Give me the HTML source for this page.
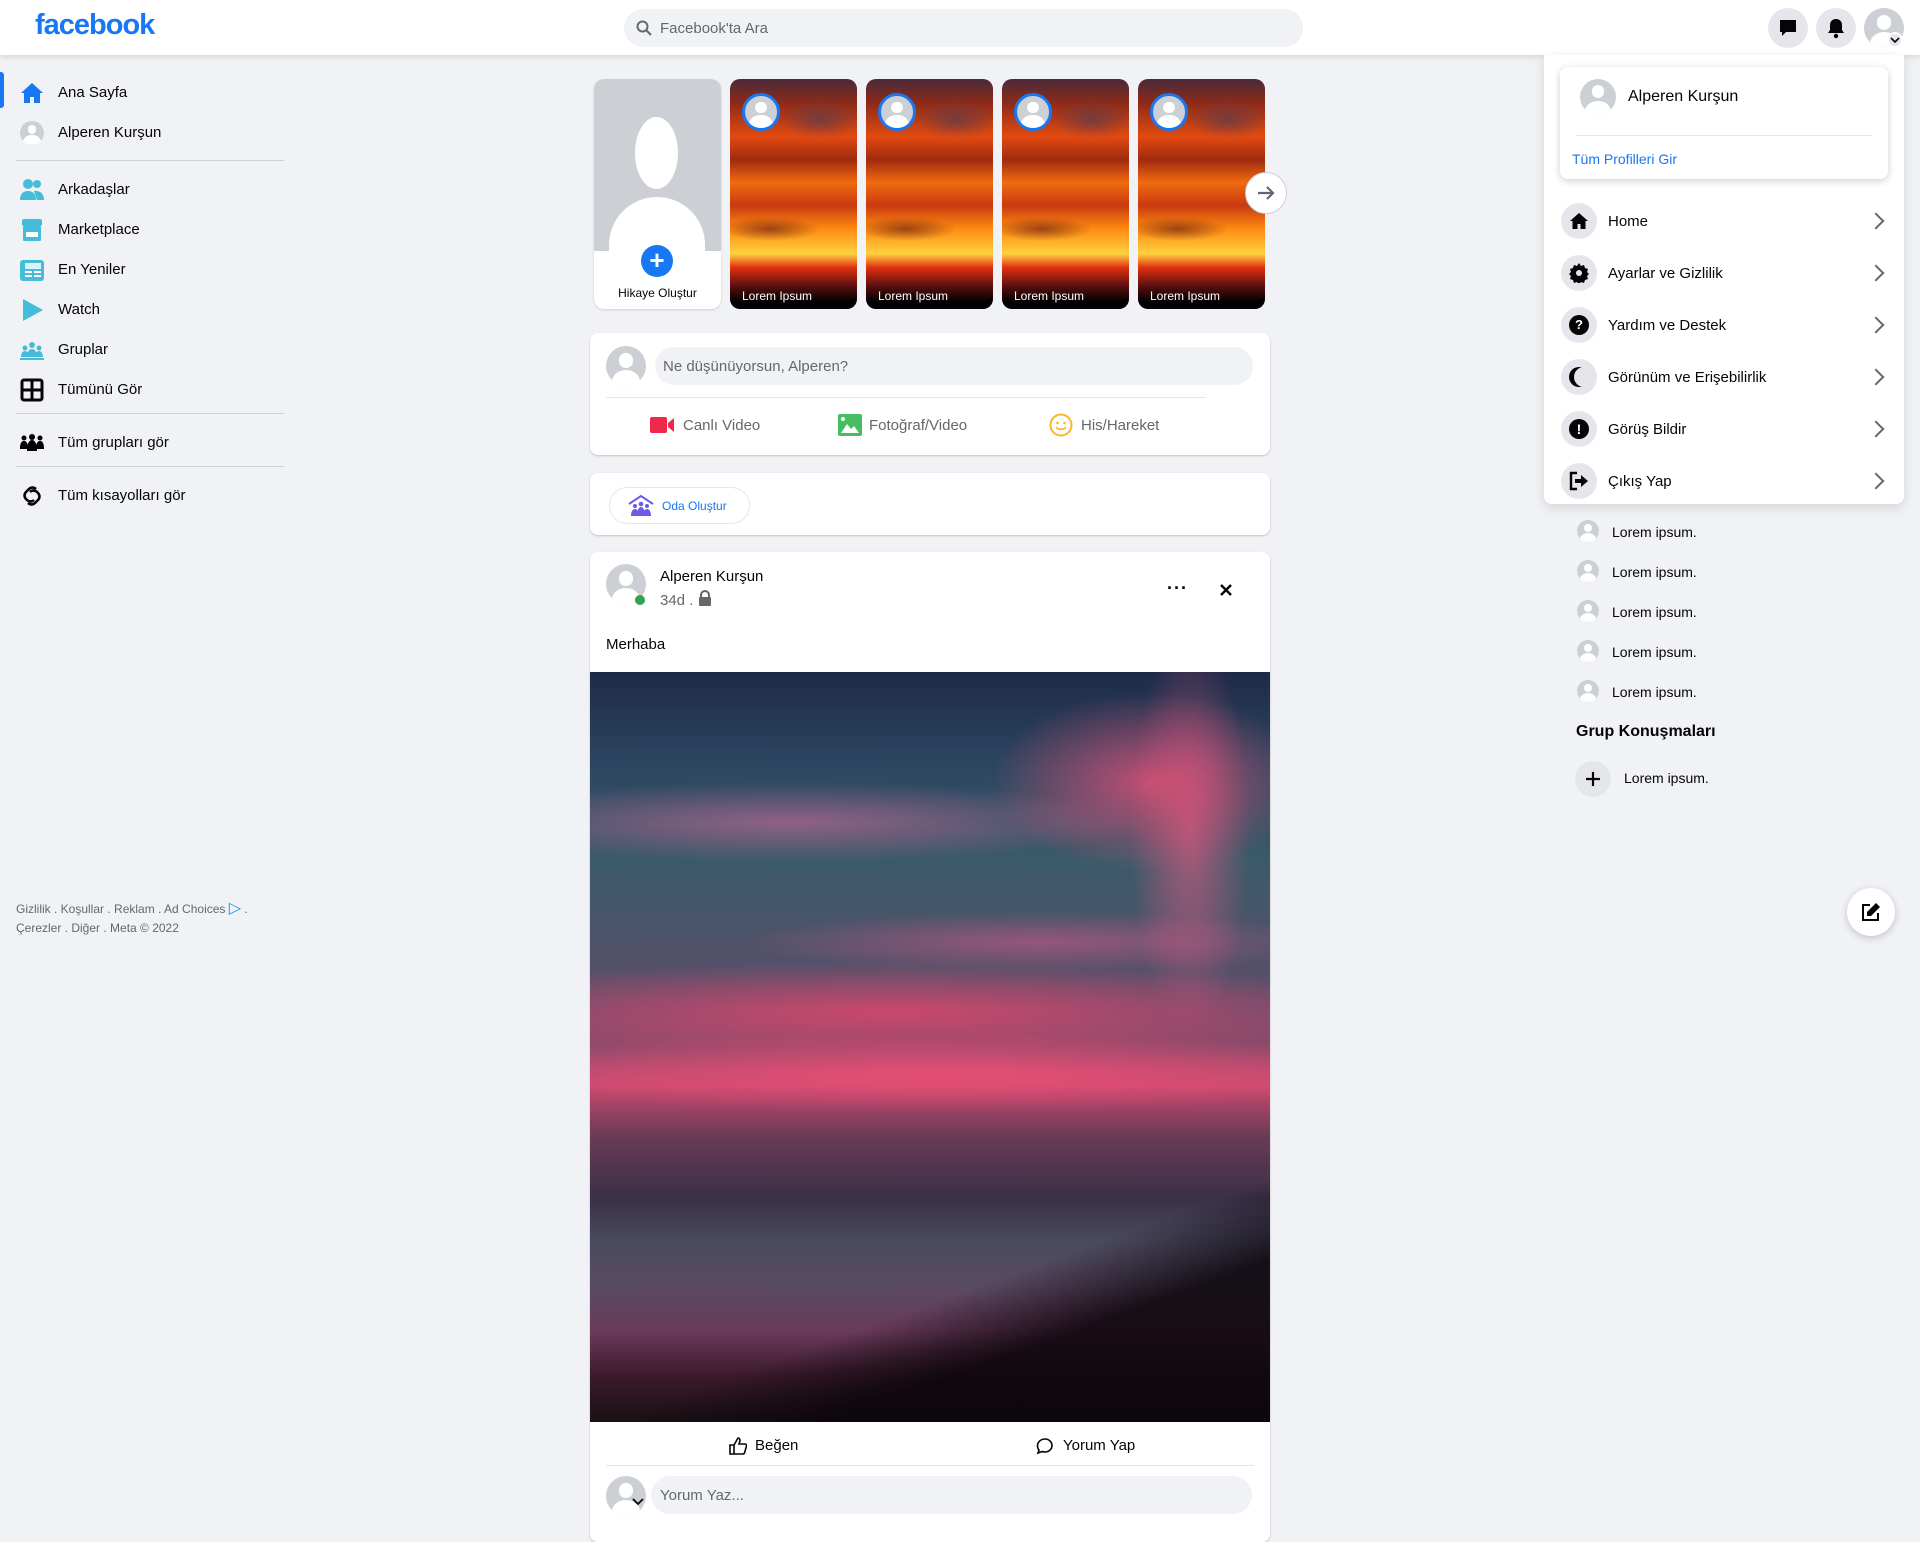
<!DOCTYPE html>
<html><head><meta charset="utf-8">
<style>
*{box-sizing:border-box;margin:0;padding:0}
body{width:1920px;height:1523px;background:#f0f2f5;font-family:"Liberation Sans",sans-serif;color:#050505;position:relative;overflow:hidden}
.a{position:absolute}
.hdr{left:0;top:0;width:1920px;height:55px;background:#fff;box-shadow:0 2px 6px rgba(0,0,0,.12)}
.logo{left:35px;top:9px;font-size:29px;font-weight:bold;color:#1877f2;letter-spacing:-1px}
.search{left:624px;top:9px;width:679px;height:38px;border-radius:19px;background:#f0f2f5;font-size:15px;color:#65676b;padding:11px 0 0 36px}
.hc{width:40px;height:40px;border-radius:50%;background:#e4e6eb;top:8px}
.sb{left:58px;font-size:15px;color:#050505}
.sep{left:16px;width:268px;height:1px;background:#ced0d4}
.ic{left:20px;width:24px;height:24px}
.av{border-radius:50%;background:#ccd0d5;overflow:hidden}
.av:before{content:"";position:absolute;left:32%;top:18%;width:36%;height:36%;border-radius:50%;background:#fff}
.av:after{content:"";position:absolute;left:14%;top:60%;width:72%;height:60%;border-radius:50%;background:#fff}
.card{background:#fff;border-radius:8px;box-shadow:0 1px 2px rgba(0,0,0,.2)}
.story{top:79px;width:127px;height:230px;border-radius:10px;overflow:hidden;
background:radial-gradient(ellipse 40px 20px at 90px 40px,rgba(90,60,80,.7),transparent),radial-gradient(ellipse 50px 12px at 40px 150px,rgba(90,20,20,.6),transparent),linear-gradient(180deg,#4a2a3a 0%,#8a2a1a 10%,#e24a10 25%,#a02a10 35%,#f06a10 45%,#c83a10 55%,#ff8a10 65%,#ffd040 76%,#e03010 82%,#5a1010 90%,#000 97%)}
.story .sa{position:absolute;left:12px;top:14px;width:38px;height:38px;border:3px solid #1877f2}
.story span{position:absolute;left:12px;bottom:6px;color:#fff;font-size:12px}
.mi{left:1561px;width:36px;height:36px;border-radius:50%;background:#e4e6eb}
.mt{left:1608px;font-size:15px;color:#050505}
.chev{left:1870px;width:12px;height:12px;border-right:2.5px solid #606770;border-top:2.5px solid #606770;transform:rotate(45deg)}
.li{left:1577px;width:22px;height:22px}
.lt{left:1612px;font-size:14px}
</style></head><body>
<div class="a hdr"></div>
<div class="a logo">facebook</div>
<div class="a search">Facebook'ta Ara</div>
<svg class="a" style="left:636px;top:20px" width="16" height="16" viewBox="0 0 16 16"><circle cx="6.5" cy="6.5" r="5" fill="none" stroke="#65676b" stroke-width="2"/><path d="M10.5 10.5L15 15" stroke="#65676b" stroke-width="2"/></svg>
<div class="a hc" style="left:1768px"></div>
<svg class="a" style="left:1778px;top:18px" width="20" height="20" viewBox="0 0 20 20"><path d="M2 2h16v12H8l-4 4v-4H2z" fill="#050505"/></svg>
<div class="a hc" style="left:1816px"></div>
<svg class="a" style="left:1826px;top:17px" width="20" height="22" viewBox="0 0 20 22"><path d="M10 2c-4 0-6 3-6 6v5l-2 3h16l-2-3V8c0-3-2-6-6-6z" fill="#050505"/><circle cx="10" cy="19" r="2.2" fill="#050505"/></svg>
<div class="a hc av" style="left:1864px"></div>
<div class="a" style="left:1887px;top:32px;width:16px;height:16px;border-radius:50%;background:#e4e6eb;border:2px solid #fff"></div>
<svg class="a" style="left:1890px;top:36px" width="10" height="8"><path d="M1 2l4 4 4-4" fill="none" stroke="#050505" stroke-width="1.6"/></svg>

<div class="a" style="left:0;top:72px;width:4px;height:36px;background:#1877f2;border-radius:0 3px 3px 0"></div>
<svg class="a ic" style="top:81px" viewBox="0 0 24 24"><path d="M12 2L1 12h3v10h6v-6h4v6h6V12h3z" fill="#1877f2"/></svg>
<div class="a sb" style="top:84px">Ana Sayfa</div>
<div class="a av ic" style="top:121px;position:absolute"></div>
<div class="a sb" style="top:124px">Alperen Kurşun</div>
<div class="a sep" style="top:160px"></div>
<svg class="a ic" style="top:178px" viewBox="0 0 24 24"><circle cx="8" cy="6" r="5" fill="#45bdd8"/><circle cx="17" cy="6" r="4" fill="#45bdd8"/><path d="M0 22c0-6 3-9 8-9s8 3 8 9z" fill="#45bdd8"/><path d="M14 13c5-1 10 2 10 9h-7z" fill="#45bdd8"/></svg>
<div class="a sb" style="top:181px">Arkadaşlar</div>
<svg class="a ic" style="top:218px" viewBox="0 0 24 24"><rect x="2" y="1" width="20" height="7" rx="2" fill="#45bdd8"/><rect x="3" y="8" width="18" height="15" rx="1" fill="#45bdd8"/><rect x="6" y="14" width="12" height="5" fill="#fff"/></svg>
<div class="a sb" style="top:221px">Marketplace</div>
<svg class="a ic" style="top:258px" viewBox="0 0 24 24"><rect x="0" y="2" width="24" height="21" rx="3" fill="#45bdd8"/><rect x="5" y="5" width="16" height="6" fill="#fff" opacity=".8"/><rect x="5" y="13" width="7" height="2" fill="#fff"/><rect x="14" y="13" width="7" height="2" fill="#fff"/><rect x="5" y="17" width="7" height="2" fill="#fff"/><rect x="14" y="17" width="7" height="2" fill="#fff"/></svg>
<div class="a sb" style="top:261px">En Yeniler</div>
<svg class="a ic" style="top:298px" viewBox="0 0 24 24"><path d="M3 1l20 11L3 23z" fill="#45bdd8"/></svg>
<div class="a sb" style="top:301px">Watch</div>
<svg class="a ic" style="top:338px" viewBox="0 0 24 24"><circle cx="5" cy="10" r="2.5" fill="#45bdd8"/><circle cx="12" cy="7" r="3" fill="#45bdd8"/><circle cx="19" cy="10" r="2.5" fill="#45bdd8"/><path d="M1 19c0-4 2-6 4-6s4 2 4 6zM7 19c0-5 2-8 5-8s5 3 5 8zM15 19c0-4 2-6 4-6s4 2 4 6z" fill="#45bdd8"/><rect x="0" y="20" width="24" height="2" fill="#45bdd8"/></svg>
<div class="a sb" style="top:341px">Gruplar</div>
<svg class="a ic" style="top:378px" viewBox="0 0 24 24"><rect x="2" y="2" width="20" height="20" rx="2" fill="none" stroke="#050505" stroke-width="3"/><path d="M12 2v20M2 12h20" stroke="#050505" stroke-width="3"/></svg>
<div class="a sb" style="top:381px">Tümünü Gör</div>
<div class="a sep" style="top:413px"></div>
<svg class="a ic" style="top:431px" viewBox="0 0 24 24"><circle cx="4" cy="7" r="2.5"/><circle cx="12" cy="6" r="3"/><circle cx="20" cy="7" r="2.5"/><path d="M0 18c0-5 1-8 4-8s4 3 4 8zM7 20c0-7 2-11 5-11s5 4 5 11zM16 18c0-5 1-8 4-8s4 3 4 8z"/></svg>
<div class="a sb" style="top:434px">Tüm grupları gör</div>
<div class="a sep" style="top:466px"></div>
<svg class="a ic" style="top:484px" viewBox="0 0 24 24"><path d="M10 8a5 5 0 0 1 7 0l1 1a5 5 0 0 1 0 7l-3 3a5 5 0 0 1-7 0M14 16a5 5 0 0 1-7 0l-1-1a5 5 0 0 1 0-7l3-3a5 5 0 0 1 7 0" fill="none" stroke="#050505" stroke-width="2.6"/></svg>
<div class="a sb" style="top:487px">Tüm kısayolları gör</div>
<div class="a" style="left:16px;top:899px;font-size:12px;color:#65676b;line-height:19px">Gizlilik . Koşullar . Reklam . Ad Choices <span style="color:#00a0e0;font-size:16px">▷</span> .<br>Çerezler . Diğer . Meta © 2022</div>

<div class="a" style="left:594px;top:79px;width:127px;height:230px;border-radius:10px;overflow:hidden;background:#fff;box-shadow:0 1px 2px rgba(0,0,0,.15)">
 <div style="position:absolute;left:0;top:0;width:127px;height:172px;background:#ccd0d5"></div>
 <div style="position:absolute;left:41px;top:38px;width:43px;height:72px;border-radius:50%;background:#fff"></div>
 <div style="position:absolute;left:15px;top:118px;width:96px;height:100px;border-radius:48px 48px 0 0;background:#fff"></div>
 <div style="position:absolute;left:47px;top:166px;width:32px;height:32px;border-radius:50%;background:#1877f2;color:#fff;font-size:26px;line-height:30px;text-align:center;font-weight:bold">+</div>
 <div style="position:absolute;left:0;width:127px;top:207px;text-align:center;font-size:12px;color:#050505">Hikaye Oluştur</div>
</div>
<div class="a story" style="left:730px"><div class="av sa"></div><span>Lorem Ipsum</span></div>
<div class="a story" style="left:866px"><div class="av sa"></div><span>Lorem Ipsum</span></div>
<div class="a story" style="left:1002px"><div class="av sa"></div><span>Lorem Ipsum</span></div>
<div class="a story" style="left:1138px"><div class="av sa"></div><span>Lorem Ipsum</span></div>
<div class="a" style="left:1245px;top:172px;width:42px;height:42px;border-radius:50%;background:#fff;border:1px solid #ccd0d5"></div>
<svg class="a" style="left:1256px;top:183px" width="20" height="20" viewBox="0 0 20 20"><path d="M2 10h15M11 4l6 6-6 6" fill="none" stroke="#606770" stroke-width="2.2"/></svg>

<div class="a card" style="left:590px;top:333px;width:680px;height:122px"></div>
<div class="a av" style="left:606px;top:346px;width:40px;height:40px"></div>
<div class="a" style="left:655px;top:347px;width:598px;height:38px;border-radius:19px;background:#f0f2f5;font-size:15px;color:#65676b;padding:11px 0 0 8px">Ne düşünüyorsun, Alperen?</div>
<div class="a" style="left:606px;top:397px;width:600px;height:1px;background:#e4e6eb"></div>
<svg class="a" style="left:650px;top:415px" width="26" height="20" viewBox="0 0 26 20"><rect x="0" y="2" width="17" height="16" rx="2" fill="#f02849"/><path d="M18 8l6-5v14l-6-5z" fill="#f02849"/></svg>
<div class="a" style="left:683px;top:417px;font-size:15px;color:#65676b">Canlı Video</div>
<svg class="a" style="left:838px;top:414px" width="24" height="22" viewBox="0 0 24 22"><rect x="0" y="0" width="24" height="22" rx="2" fill="#45bd62"/><path d="M3 19l6-9 4 5 3-3 5 7z" fill="#fff"/><circle cx="5" cy="5" r="2" fill="#fff"/></svg>
<div class="a" style="left:869px;top:417px;font-size:15px;color:#65676b">Fotoğraf/Video</div>
<svg class="a" style="left:1049px;top:413px" width="24" height="24" viewBox="0 0 24 24"><circle cx="12" cy="12" r="10.5" fill="#fff" stroke="#f7b928" stroke-width="2"/><circle cx="8.5" cy="10" r="1.3" fill="#f7b928"/><circle cx="15.5" cy="10" r="1.3" fill="#f7b928"/><path d="M7 14c2 3 8 3 10 0" fill="none" stroke="#f7b928" stroke-width="1.6"/></svg>
<div class="a" style="left:1081px;top:417px;font-size:15px;color:#65676b">His/Hareket</div>

<div class="a card" style="left:590px;top:473px;width:680px;height:62px"></div>
<div class="a" style="left:609px;top:487px;width:141px;height:37px;border-radius:19px;border:1px solid #e4e6eb"></div>
<svg class="a" style="left:628px;top:495px" width="26" height="22" viewBox="0 0 26 22"><path d="M1 9L13 1l12 8" fill="none" stroke="#6b5ce7" stroke-width="2"/><circle cx="7" cy="11" r="2" fill="#6b5ce7"/><circle cx="13" cy="9" r="2.3" fill="#6b5ce7"/><circle cx="19" cy="11" r="2" fill="#6b5ce7"/><path d="M3 21c0-5 2-7 4-7s4 2 4 7zM9 21c0-6 2-9 4-9s4 3 4 9zM15 21c0-5 2-7 4-7s4 2 4 7z" fill="#6b5ce7"/></svg>
<div class="a" style="left:662px;top:499px;font-size:12px;color:#1877f2">Oda Oluştur</div>

<div class="a card" style="left:590px;top:552px;width:680px;height:990px;overflow:hidden">
 <div style="position:absolute;left:0;top:120px;width:680px;height:750px;
 background:
 radial-gradient(ellipse 160px 90px at 560px 110px,rgba(240,80,120,.75),transparent),
 radial-gradient(ellipse 60px 200px at 600px 160px,rgba(240,90,130,.6),transparent),
 radial-gradient(ellipse 360px 40px at 200px 150px,rgba(220,110,160,.55),transparent),
 radial-gradient(ellipse 300px 30px at 450px 270px,rgba(220,90,140,.5),transparent),
 radial-gradient(ellipse 500px 50px at 300px 340px,rgba(240,70,110,.7),transparent),
 radial-gradient(ellipse 500px 40px at 350px 400px,rgba(250,80,120,.7),transparent),
 linear-gradient(180deg,#1e2a48 0%,#2b4560 12%,#3a5a6a 25%,#56506a 40%,#8a4a6a 50%,#c84a70 55%,#6a3a55 62%,#3a3048 70%,#4a4a5e 76%,#5a4a62 82%,#6a3a5a 88%,#3a1a2a 94%,#1a1015 100%)"></div>
 <div style="position:absolute;left:0;top:580px;width:680px;height:290px;background:linear-gradient(160deg,transparent 55%,rgba(10,5,10,.85) 70%)"></div>
</div>
<div class="a av" style="left:606px;top:564px;width:40px;height:40px"></div>
<div class="a" style="left:635px;top:595px;width:10px;height:10px;border-radius:50%;background:#31a24c"></div>
<div class="a" style="left:660px;top:568px;font-size:15px">Alperen Kurşun</div>
<div class="a" style="left:660px;top:592px;font-size:15px;color:#65676b">34d . </div>
<svg class="a" style="left:698px;top:590px" width="14" height="16" viewBox="0 0 14 16"><path d="M3 7V5a4 4 0 0 1 8 0v2" fill="none" stroke="#65676b" stroke-width="2"/><rect x="1" y="7" width="12" height="9" rx="1" fill="#65676b"/></svg>
<div class="a" style="left:1167px;top:578px;font-size:18px;font-weight:bold;letter-spacing:1px">···</div>
<svg class="a" style="left:1219px;top:583px" width="14" height="14"><path d="M2 2l10 10M12 2L2 12" stroke="#050505" stroke-width="2.4"/></svg>
<div class="a" style="left:606px;top:636px;font-size:15px">Merhaba</div>
<svg class="a" style="left:729px;top:1437px" width="18" height="18" viewBox="0 0 18 18"><path d="M1 8h4v9H1zM5 8l4-7c2 0 2 2 2 3l-1 3h6c1 0 2 1 1.5 2l-2 7c-.3 1-1 1-2 1H5" fill="none" stroke="#050505" stroke-width="1.6"/></svg>
<div class="a" style="left:755px;top:1437px;font-size:15px;color:#050505">Beğen</div>
<svg class="a" style="left:1036px;top:1437px" width="18" height="18" viewBox="0 0 18 18"><path d="M9 2c4 0 7 3 7 6.5S13 15 9 15c-1 0-2 0-3-.5L2 16l1-3c-1-1-1.5-3-1.5-4.5C1.5 5 5 2 9 2z" fill="none" stroke="#050505" stroke-width="1.6"/></svg>
<div class="a" style="left:1063px;top:1437px;font-size:15px;color:#050505">Yorum Yap</div>
<div class="a" style="left:606px;top:1465px;width:648px;height:1px;background:#e4e6eb"></div>
<div class="a av" style="left:606px;top:1476px;width:40px;height:40px"></div>
<svg class="a" style="left:632px;top:1498px" width="12" height="8"><path d="M1 1l5 5 5-5" fill="none" stroke="#050505" stroke-width="1.8"/></svg>
<div class="a" style="left:651px;top:1476px;width:601px;height:38px;border-radius:19px;background:#f0f2f5;font-size:15px;color:#65676b;padding:11px 0 0 9px">Yorum Yaz...</div>

<div class="a" style="left:1544px;top:55px;width:360px;height:449px;background:#fff;border-radius:0 0 8px 8px;box-shadow:0 4px 12px rgba(0,0,0,.12)"></div>
<div class="a" style="left:1560px;top:67px;width:328px;height:112px;background:#fff;border-radius:8px;box-shadow:0 2px 8px rgba(0,0,0,.2)"></div>
<div class="a av" style="left:1580px;top:79px;width:36px;height:36px"></div>
<div class="a" style="left:1628px;top:88px;font-size:16px">Alperen Kurşun</div>
<div class="a" style="left:1576px;top:135px;width:296px;height:1px;background:#e4e6eb"></div>
<div class="a" style="left:1572px;top:151px;font-size:14px;color:#1877f2">Tüm Profilleri Gir</div>

<div class="a mi" style="top:203px"></div>
<svg class="a" style="left:1569px;top:211px" width="20" height="20" viewBox="0 0 20 20"><path d="M10 2L1 10h2.5v8h5v-5h3v5h5v-8H19z" fill="#050505"/></svg>
<div class="a mt" style="top:213px">Home</div><div class="a chev" style="top:215px"></div>
<div class="a mi" style="top:255px"></div>
<svg class="a" style="left:1569px;top:263px" width="20" height="20" viewBox="0 0 20 20"><path d="M10 0l2 3 3-1 1 3 3 1-1 3 2 2-2 2 1 3-3 1-1 3-3-1-2 3-2-3-3 1-1-3-3-1 1-3-2-2 2-2-1-3 3-1 1-3 3 1z" fill="#050505"/><circle cx="10" cy="10" r="3" fill="#e4e6eb"/></svg>
<div class="a mt" style="top:265px">Ayarlar ve Gizlilik</div><div class="a chev" style="top:267px"></div>
<div class="a mi" style="top:307px"></div>
<div class="a" style="left:1569px;top:315px;width:20px;height:20px;border-radius:50%;background:#050505;color:#fff;font-size:13px;font-weight:bold;text-align:center;line-height:20px">?</div>
<div class="a mt" style="top:317px">Yardım ve Destek</div><div class="a chev" style="top:319px"></div>
<div class="a mi" style="top:359px"></div>
<div class="a" style="left:1569px;top:367px;width:20px;height:20px;border-radius:50%;box-shadow:inset 5px 0 0 0 #050505"></div>
<div class="a mt" style="top:369px">Görünüm ve Erişebilirlik</div><div class="a chev" style="top:371px"></div>
<div class="a mi" style="top:411px"></div>
<div class="a" style="left:1569px;top:419px;width:20px;height:20px;border-radius:50%;background:#050505;color:#fff;font-size:14px;font-weight:bold;text-align:center;line-height:20px">!</div>
<div class="a mt" style="top:421px">Görüş Bildir</div><div class="a chev" style="top:423px"></div>
<div class="a mi" style="top:463px"></div>
<svg class="a" style="left:1569px;top:471px" width="20" height="20" viewBox="0 0 20 20"><path d="M8 2H2v16h6" fill="none" stroke="#050505" stroke-width="2.4"/><path d="M6 8h6V4l7 6-7 6v-4H6z" fill="#050505"/></svg>
<div class="a mt" style="top:473px">Çıkış Yap</div><div class="a chev" style="top:475px"></div>

<div class="a av li" style="top:520px"></div><div class="a lt" style="top:524px">Lorem ipsum.</div>
<div class="a av li" style="top:560px"></div><div class="a lt" style="top:564px">Lorem ipsum.</div>
<div class="a av li" style="top:600px"></div><div class="a lt" style="top:604px">Lorem ipsum.</div>
<div class="a av li" style="top:640px"></div><div class="a lt" style="top:644px">Lorem ipsum.</div>
<div class="a av li" style="top:680px"></div><div class="a lt" style="top:684px">Lorem ipsum.</div>
<div class="a" style="left:1576px;top:723px;font-size:16px;font-weight:bold;color:#050505">Grup Konuşmaları</div>
<div class="a" style="left:1575px;top:761px;width:36px;height:36px;border-radius:50%;background:#e4e6eb"></div>
<svg class="a" style="left:1585px;top:771px" width="16" height="16"><path d="M8 1v14M1 8h14" stroke="#050505" stroke-width="2.2"/></svg>
<div class="a lt" style="left:1624px;top:770px">Lorem ipsum.</div>

<div class="a" style="left:1847px;top:888px;width:48px;height:48px;border-radius:50%;background:#fff;box-shadow:0 2px 8px rgba(0,0,0,.2)"></div>
<svg class="a" style="left:1861px;top:902px" width="20" height="20" viewBox="0 0 20 20"><path d="M9 3H2v15h15v-7" fill="none" stroke="#050505" stroke-width="2"/><path d="M15 1l4 4-9 9H6v-4z" fill="#050505"/></svg>
</body></html>
